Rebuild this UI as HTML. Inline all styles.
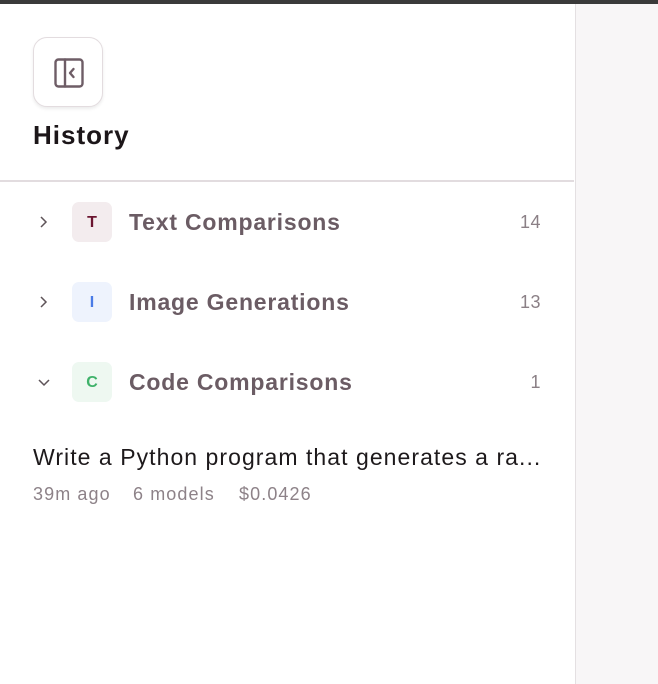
<!DOCTYPE html>
<html><head><style>
*{margin:0;padding:0;box-sizing:border-box}
body{width:658px;height:684px;overflow:hidden;background:#f8f6f7;font-family:"Liberation Sans",sans-serif;position:relative}
.top{position:absolute;left:0;top:0;width:658px;height:4px;background:#3a3a3a}
.side{position:absolute;left:0;top:4px;width:576px;height:680px;background:#fff;border-right:1.5px solid #e4e0e2}
.btn{position:absolute;left:33px;top:33px;width:70px;height:70px;border:1.5px solid #e3dcdf;border-radius:14px;box-shadow:0 2px 3px rgba(0,0,0,.08);background:#fff}
.btn svg{position:absolute;left:20px;top:20px}
h1{position:absolute;left:33px;top:116px;font-size:26px;font-weight:600;color:#1c1619;letter-spacing:1px}
.hr{position:absolute;left:0;top:176px;width:574px;height:2px;background:#e2dcdf}
.row{position:absolute;left:0;width:575px;height:40px}
.chev{position:absolute;left:37px;top:12px}
.badge{position:absolute;left:72px;top:0;width:40px;height:40px;border-radius:7px;font-size:16px;font-weight:700;text-align:center;line-height:42px}
.lab{position:absolute;left:129px;top:7px;font-size:23px;font-weight:600;color:#6b5c64;letter-spacing:.8px}
.cnt{position:absolute;right:34px;top:10px;font-size:18px;color:#8b8086;letter-spacing:.5px}
.item{position:absolute;left:33px;top:440px;font-size:23px;color:#1d191b;letter-spacing:1.05px;white-space:nowrap}
.meta span{position:absolute;top:480px;font-size:18px;color:#8d8288;letter-spacing:1.1px;white-space:nowrap}
</style></head><body>
<div class="top"></div>
<div class="side">
<div class="btn"><svg width="30" height="30" viewBox="0 0 30 30" fill="none" stroke="#6e5d66" stroke-width="2.4" stroke-linecap="round" stroke-linejoin="round"><rect x="1.5" y="1.5" width="27" height="27" rx="3"/><line x1="11" y1="1.5" x2="11" y2="28.5"/><polyline points="19.5,11 16,15 19.5,19"/></svg></div>
<h1>History</h1>
<div class="hr"></div>
<div class="row" style="top:198px"><svg class="chev" width="14" height="16" viewBox="0 0 14 16" fill="none" stroke="#5e5459" stroke-width="1.5"><polyline points="4,3 9,8 4,13"/></svg><div class="badge" style="background:#f3ecee;color:#6b1530">T</div><div class="lab">Text Comparisons</div><div class="cnt">14</div></div>
<div class="row" style="top:278px"><svg class="chev" width="14" height="16" viewBox="0 0 14 16" fill="none" stroke="#5e5459" stroke-width="1.5"><polyline points="4,3 9,8 4,13"/></svg><div class="badge" style="background:#eef3fd;color:#4a7be6">I</div><div class="lab">Image Generations</div><div class="cnt">13</div></div>
<div class="row" style="top:358px"><svg class="chev" width="16" height="14" viewBox="0 0 16 14" fill="none" stroke="#5e5459" stroke-width="1.5" style="left:36px;top:14px"><polyline points="3,4 8,9 13,4"/></svg><div class="badge" style="background:#eef8f1;color:#3fb26a">C</div><div class="lab">Code Comparisons</div><div class="cnt">1</div></div>
<div class="item">Write a Python program that generates a ra...</div>
<div class="meta"><span style="left:33px">39m ago</span><span style="left:133px">6 models</span><span style="left:239px">$0.0426</span></div>
</div>
</body></html>
